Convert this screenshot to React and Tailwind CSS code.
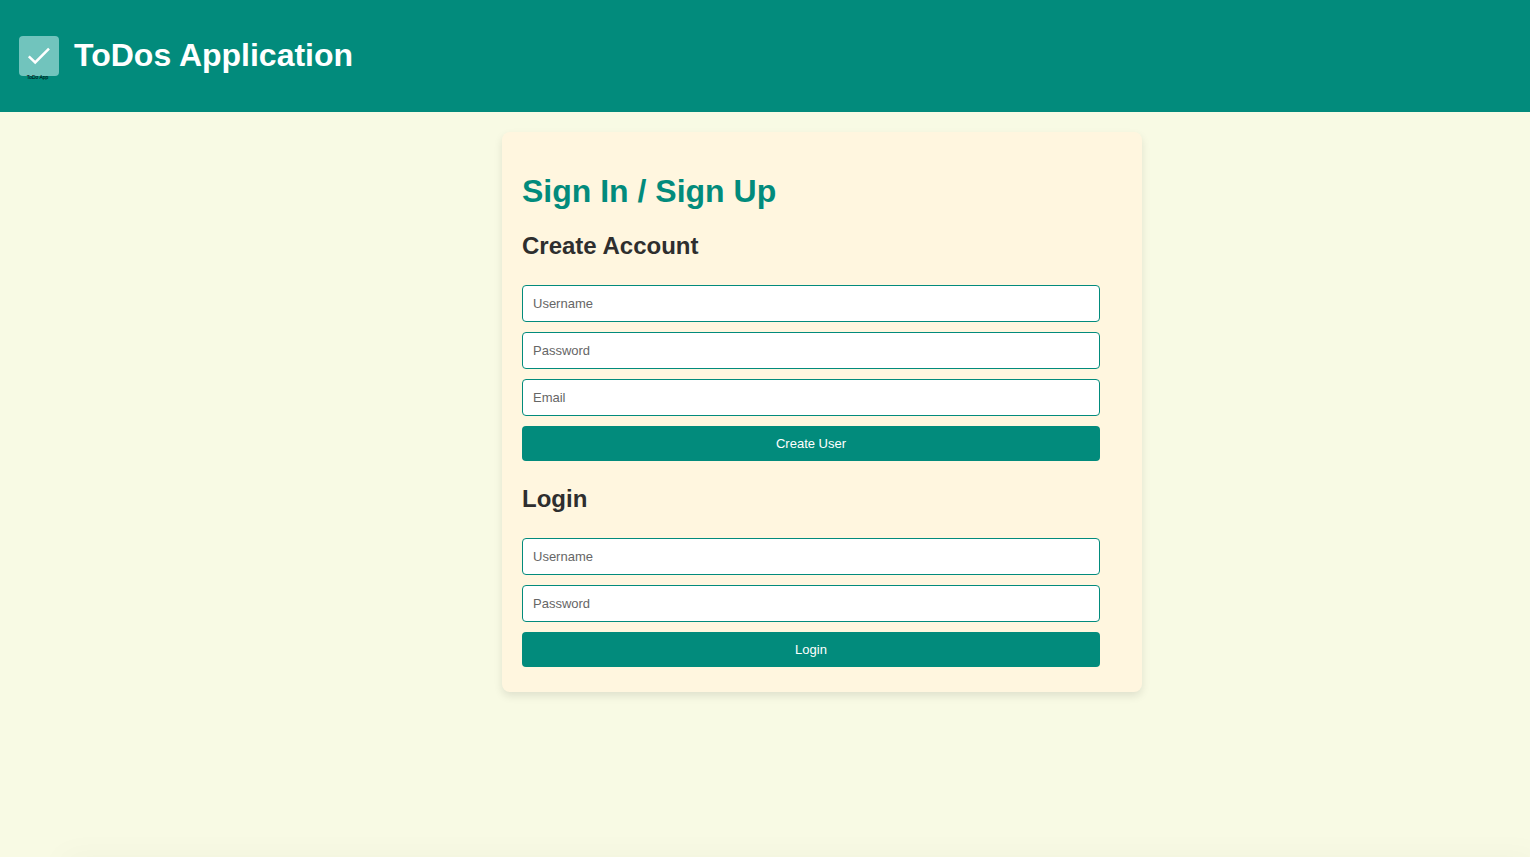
const fieldClass =
  "block h-[37px] w-full rounded border border-[#028b7c] bg-white px-2.5 text-[13px] text-[#333333] placeholder:text-[#666666]";
const buttonClass =
  "block h-[35px] w-full cursor-pointer rounded bg-[#028b7c] px-2.5 text-[13px] text-white";

function Logo() {
  return (
    <svg
      className="h-[50px] w-[50px] shrink-0"
      viewBox="0 0 50 50"
      role="img"
      aria-label="ToDo App"
    >
      <rect x="5" y="6" width="40" height="40" rx="4" fill="#71c4bd" />
      <path
        d="M14.8 26.3 L21.2 32.4 L35 18.6"
        fill="none"
        stroke="#ffffff"
        strokeWidth="2.5"
      />
      <text
        x="23.5"
        y="49"
        textAnchor="middle"
        fontFamily="Liberation Sans, Arial, sans-serif"
        fontSize="5"
        fill="#000000"
      >
        ToDo App
      </text>
    </svg>
  );
}

function Field({ label, type = "text", name, autoComplete }) {
  return (
    <input
      className={fieldClass}
      type={type}
      name={name}
      placeholder={label}
      aria-label={label}
      autoComplete={autoComplete}
    />
  );
}

function Section({ title, children }) {
  return (
    <section>
      <h2 className="mb-[25px] text-2xl leading-7 font-bold text-[#2e2e2e]">
        {title}
      </h2>
      <form
        className="flex flex-col gap-2.5 pr-[22px]"
        onSubmit={(event) => event.preventDefault()}
      >
        {children}
      </form>
    </section>
  );
}

export default function App() {
  return (
    <div className="flex min-h-screen flex-col overflow-hidden bg-[#f8fae4] font-['Liberation_Sans',Arial,sans-serif]">
      <header className="flex items-center gap-2.5 bg-[#028b7c] px-3.5 pt-[30px] pb-8">
        <Logo />
        <h1 className="text-[32px] leading-10 font-bold text-white">
          ToDos Application
        </h1>
      </header>

      <main className="flex grow items-start justify-center py-5 pl-[114px]">
        <div className="w-full max-w-[640px] rounded-lg bg-[#fff6df] px-5 pt-10 pb-[25px] shadow-[0_4px_8px_rgba(0,0,0,0.1)]">
          <h1 className="mb-[22px] text-[32px] leading-[38px] font-bold text-[#028b7c]">
            Sign In / Sign Up
          </h1>
          <div className="flex flex-col gap-6">
            <Section title="Create Account">
              <Field label="Username" name="new-username" autoComplete="username" />
              <Field
                label="Password"
                name="new-password"
                type="password"
                autoComplete="new-password"
              />
              <Field label="Email" name="email" type="email" autoComplete="email" />
              <button type="submit" className={buttonClass}>
                Create User
              </button>
            </Section>
            <Section title="Login">
              <Field label="Username" name="username" autoComplete="username" />
              <Field
                label="Password"
                name="password"
                type="password"
                autoComplete="current-password"
              />
              <button type="submit" className={buttonClass}>
                Login
              </button>
            </Section>
          </div>
        </div>
      </main>

      <div className="ml-[70px] shadow-[0_10px_32px_8px_rgba(0,0,0,0.05)]" />
    </div>
  );
}
